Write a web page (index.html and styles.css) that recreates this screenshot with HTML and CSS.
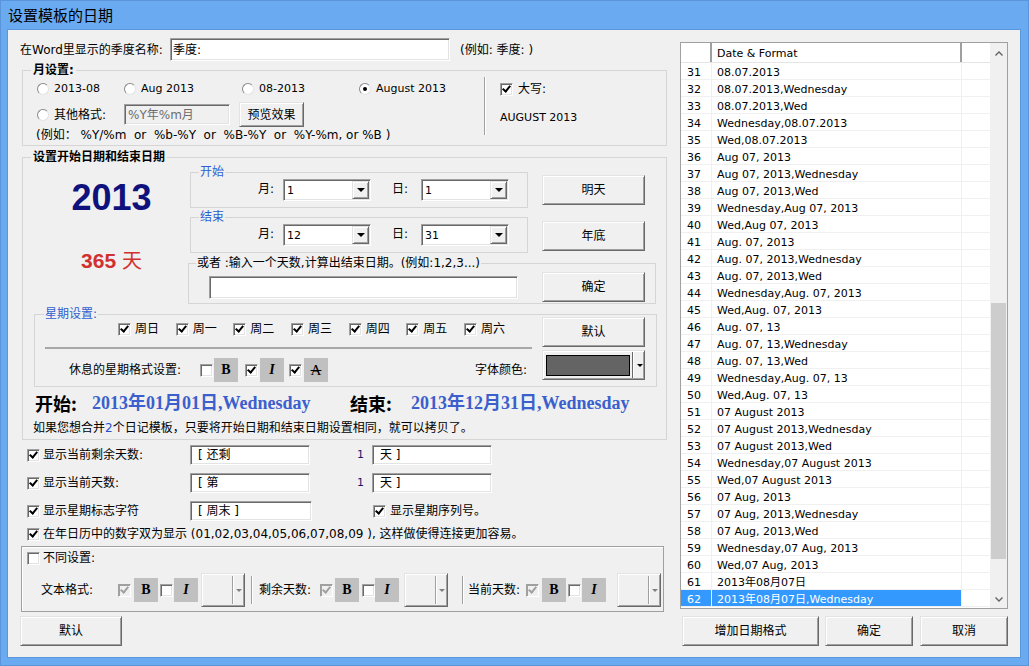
FILE: index.html
```html
<!DOCTYPE html>
<html lang="zh-CN">
<head>
<meta charset="utf-8">
<title>设置模板的日期</title>
<link rel="stylesheet" href="styles.css">
</head>
<body>
<div class="win">
  <div class="title">设置模板的日期</div>
  <div class="client">
    <div class="left">
      <div class="rowA">
        <span class="lblA">在Word里显示的季度名称:</span>
        <span class="edit editA">季度:</span>
        <span class="exA">(例如: 季度: )</span>
      </div>

      <fieldset class="grp g1">
        <legend class="lg-b">月设置:</legend>
        <div class="g1-body">
          <div class="g1-left">
            <div class="g1-r1">
              <span class="opt o1"><span class="rd"></span><span class="lat">2013-08</span></span>
              <span class="opt o2"><span class="rd"></span><span class="lat">Aug 2013</span></span>
              <span class="opt o3"><span class="rd"></span><span class="lat">08-2013</span></span>
              <span class="opt"><span class="rd on"></span><span class="lat">August 2013</span></span>
            </div>
            <div class="g1-r2">
              <span class="opt o1"><span class="rd"></span>其他格式:</span>
              <span class="edit editB">%Y年%m月</span>
              <span class="btn btnPrev">预览效果</span>
            </div>
            <div class="g1-r3">(例如： %Y/%m  or  %b-%Y  or  %B-%Y  or  %Y-%m, or %B )</div>
          </div>
          <div class="g1-sep"></div>
          <div class="g1-right">
            <div class="upper"><span class="cb on"></span><span>大写:</span></div>
            <div class="lat upval">AUGUST 2013</div>
          </div>
        </div>
      </fieldset>

      <fieldset class="grp g2">
        <legend class="lg-b">设置开始日期和结束日期</legend>
        <div class="g2-body">
          <div class="g2-top">
            <div class="colA">
              <div class="year">2013</div>
              <div class="days">365 <span class="unit">天</span></div>
            </div>
            <div class="colB">
              <fieldset class="grp sg sg1">
                <legend>开始</legend>
                <div class="sg-body">
                  <span class="lblM">月:</span>
                  <span class="combo"><span class="val">1</span><span class="dd"><i class="tri"></i></span></span>
                  <span class="lblD">日:</span>
                  <span class="combo"><span class="val">1</span><span class="dd"><i class="tri"></i></span></span>
                </div>
              </fieldset>
              <fieldset class="grp sg sg2">
                <legend>结束</legend>
                <div class="sg-body">
                  <span class="lblM">月:</span>
                  <span class="combo"><span class="val">12</span><span class="dd"><i class="tri"></i></span></span>
                  <span class="lblD">日:</span>
                  <span class="combo"><span class="val">31</span><span class="dd"><i class="tri"></i></span></span>
                </div>
              </fieldset>
            </div>
            <div class="colC">
              <span class="btn b103 bTom">明天</span>
              <span class="btn b103 bEnd">年底</span>
            </div>
          </div>

          <fieldset class="grp orf">
            <legend>或者 :输入一个天数,计算出结束日期。(例如:1,2,3...)</legend>
            <div class="or-body">
              <span class="edit or-edit"></span>
              <span class="btn b103 or-btn">确定</span>
            </div>
          </fieldset>

          <fieldset class="grp wk">
            <legend>星期设置:</legend>
            <div class="wk-body">
              <div class="wk-left">
                <div class="wk-r1">
                  <span class="day"><span class="cb on"></span>周日</span>
                  <span class="day"><span class="cb on"></span>周一</span>
                  <span class="day"><span class="cb on"></span>周二</span>
                  <span class="day"><span class="cb on"></span>周三</span>
                  <span class="day"><span class="cb on"></span>周四</span>
                  <span class="day"><span class="cb on"></span>周五</span>
                  <span class="day"><span class="cb on"></span>周六</span>
                </div>
                <div class="wk-sep"></div>
                <div class="wk-r2">
                  <span class="restLbl">休息的星期格式设置:</span>
                  <span class="cb"></span>
                  <span class="fb m1">B</span>
                  <span class="cb on m7"></span>
                  <span class="fb it m2">I</span>
                  <span class="cb on m5"></span>
                  <span class="fb st m2">A</span>
                  <span class="colorLbl">字体颜色:</span>
                </div>
              </div>
              <div class="wk-right">
                <span class="btn b103 bDef">默认</span>
                <span class="ccombo"><span class="swatch"></span><span class="cdiv"></span><i class="tri sm"></i></span>
              </div>
            </div>
          </fieldset>

          <div class="dates">
            <span class="dl dl1">开始:</span><span class="dv dv1">2013年01月01日,Wednesday</span>
            <span class="dl dl2">结束:</span><span class="dv">2013年12月31日,Wednesday</span>
          </div>
          <div class="note">如果您想合并<span class="blue">2</span>个日记模板，只要将开始日期和结束日期设置相同，就可以拷贝了。</div>
        </div>
      </fieldset>

      <div class="lrow lr1">
        <span class="cb on"></span><span class="lrLbl">显示当前剩余天数:</span>
        <span class="edit e120">[ 还剩</span>
        <span class="numLbl">1</span>
        <span class="edit e120">天 ]</span>
      </div>
      <div class="lrow lr2">
        <span class="cb on"></span><span class="lrLbl">显示当前天数:</span>
        <span class="edit e120">[ 第</span>
        <span class="numLbl">1</span>
        <span class="edit e120">天 ]</span>
      </div>
      <div class="lrow lr3">
        <span class="cb on"></span><span class="lrLbl">显示星期标志字符</span>
        <span class="edit e122">[ 周末 ]</span>
        <span class="cb on cb2"></span><span class="lbl2">显示星期序列号。</span>
      </div>
      <div class="lrow lr4">
        <span class="cb on"></span><span class="lbl4">在年日历中的数字双为显示 (01,02,03,04,05,06,07,08,09 ), 这样做使得连接更加容易。</span>
      </div>

      <div class="diff">
        <div class="d-r1"><span class="cb"></span><span class="dlbl">不同设置:</span></div>
        <div class="d-r2">
          <span class="tfLbl">文本格式:</span>
          <span class="cb on dis"></span>
          <span class="fb m3">B</span>
          <span class="cb m2"></span>
          <span class="fb it m1">I</span>
          <span class="scombo m3"><span class="cdiv"></span><i class="tri sm g"></i></span>
          <span class="vsep m6"></span>
          <span class="rsLbl m6">剩余天数:</span>
          <span class="cb on dis"></span>
          <span class="fb m2">B</span>
          <span class="cb m3"></span>
          <span class="fb it">I</span>
          <span class="scombo m5"><span class="cdiv"></span><i class="tri sm g"></i></span>
          <span class="vsep m14"></span>
          <span class="cdLbl m4">当前天数:</span>
          <span class="cb on dis"></span>
          <span class="fb m3">B</span>
          <span class="cb m2"></span>
          <span class="fb it m1">I</span>
          <span class="scombo m11"><span class="cdiv"></span><i class="tri sm g"></i></span>
        </div>
      </div>

      <span class="btn bDefL">默认</span>
    </div>

    <div class="right">
      <div class="list">
        <div class="tbl">
          <div class="hdr"><span></span><span class="h2">Date &amp; Format</span><span class="h3"></span></div>
          <div class="row"><span>31</span><span>08.07.2013</span><span></span></div>
          <div class="row"><span>32</span><span>08.07.2013,Wednesday</span><span></span></div>
          <div class="row"><span>33</span><span>08.07.2013,Wed</span><span></span></div>
          <div class="row"><span>34</span><span>Wednesday,08.07.2013</span><span></span></div>
          <div class="row"><span>35</span><span>Wed,08.07.2013</span><span></span></div>
          <div class="row"><span>36</span><span>Aug 07, 2013</span><span></span></div>
          <div class="row"><span>37</span><span>Aug 07, 2013,Wednesday</span><span></span></div>
          <div class="row"><span>38</span><span>Aug 07, 2013,Wed</span><span></span></div>
          <div class="row"><span>39</span><span>Wednesday,Aug 07, 2013</span><span></span></div>
          <div class="row"><span>40</span><span>Wed,Aug 07, 2013</span><span></span></div>
          <div class="row"><span>41</span><span>Aug. 07, 2013</span><span></span></div>
          <div class="row"><span>42</span><span>Aug. 07, 2013,Wednesday</span><span></span></div>
          <div class="row"><span>43</span><span>Aug. 07, 2013,Wed</span><span></span></div>
          <div class="row"><span>44</span><span>Wednesday,Aug. 07, 2013</span><span></span></div>
          <div class="row"><span>45</span><span>Wed,Aug. 07, 2013</span><span></span></div>
          <div class="row"><span>46</span><span>Aug. 07, 13</span><span></span></div>
          <div class="row"><span>47</span><span>Aug. 07, 13,Wednesday</span><span></span></div>
          <div class="row"><span>48</span><span>Aug. 07, 13,Wed</span><span></span></div>
          <div class="row"><span>49</span><span>Wednesday,Aug. 07, 13</span><span></span></div>
          <div class="row"><span>50</span><span>Wed,Aug. 07, 13</span><span></span></div>
          <div class="row"><span>51</span><span>07 August 2013</span><span></span></div>
          <div class="row"><span>52</span><span>07 August 2013,Wednesday</span><span></span></div>
          <div class="row"><span>53</span><span>07 August 2013,Wed</span><span></span></div>
          <div class="row"><span>54</span><span>Wednesday,07 August 2013</span><span></span></div>
          <div class="row"><span>55</span><span>Wed,07 August 2013</span><span></span></div>
          <div class="row"><span>56</span><span>07 Aug, 2013</span><span></span></div>
          <div class="row"><span>57</span><span>07 Aug, 2013,Wednesday</span><span></span></div>
          <div class="row"><span>58</span><span>07 Aug, 2013,Wed</span><span></span></div>
          <div class="row"><span>59</span><span>Wednesday,07 Aug, 2013</span><span></span></div>
          <div class="row"><span>60</span><span>Wed,07 Aug, 2013</span><span></span></div>
          <div class="row"><span>61</span><span>2013年08月07日</span><span></span></div>
          <div class="row sel"><span>62</span><span>2013年08月07日,Wednesday</span><span></span></div>
        </div>
        <div class="vs">
          <div class="vs-btn up"><svg width="8" height="5" viewBox="0 0 8 5"><polyline points="0.5,4.5 4,1 7.5,4.5" fill="none" stroke="#606060" stroke-width="1.3"/></svg></div>
          <div class="vs-track"><div class="thumb"></div></div>
          <div class="vs-btn"><svg width="8" height="5" viewBox="0 0 8 5"><polyline points="0.5,0.5 4,4 7.5,0.5" fill="none" stroke="#606060" stroke-width="1.3"/></svg></div>
        </div>
      </div>
      <div class="rbtns">
        <span class="btn rb1">增加日期格式</span>
        <span class="btn rb2">确定</span>
        <span class="btn rb3">取消</span>
      </div>
    </div>
  </div>
</div>
</body>
</html>
```

FILE: styles.css
```css
*{box-sizing:border-box;margin:0;padding:0}
html,body{width:1029px;height:666px;overflow:hidden;background:#6aaaf0}
.win{width:1029px;height:666px;background:#6aaaf0;box-shadow:inset 0 0 0 1px #5a95da;display:flex;flex-direction:column;font-family:"DejaVu Sans","Noto Sans CJK SC",sans-serif;font-size:12px;line-height:14px;color:#000}
.title{flex:none;height:30px;padding-left:8px;font-family:"Noto Sans CJK SC",sans-serif;font-size:15px;line-height:30px}
.client{flex:none;margin-left:8px;width:1012px;height:627px;background:#f0f0f0;display:flex;box-shadow:0 0 0 1px #5b97dc}
.left{flex:none;width:672px;padding-left:12px;display:flex;flex-direction:column;align-items:flex-start}
.right{flex:none;width:340px;display:flex;flex-direction:column;align-items:flex-start}
.lat{font-size:11px}

.m1{margin-left:1px}.m2{margin-left:2px}.m3{margin-left:3px}.m4{margin-left:4px}.m5{margin-left:5px}.m6{margin-left:6px}.m7{margin-left:7px}.m11{margin-left:11px}.m14{margin-left:14px}

/* controls */
.edit{flex:none;display:flex;align-items:center;background:#fff;border:1px solid;border-color:#a0a0a0 #fff #fff #a0a0a0;box-shadow:inset 1px 1px 0 #696969,inset -1px -1px 0 #e3e3e3;padding-left:3px;white-space:nowrap;overflow:hidden}
.btn{flex:none;display:flex;align-items:center;justify-content:center;background:#f0f0f0;border:1px solid;border-color:#e3e3e3 #696969 #696969 #e3e3e3;box-shadow:inset 1px 1px 0 #fff,inset -1px -1px 0 #a0a0a0;font-size:12px;white-space:nowrap}
.cb{flex:none;width:13px;height:13px;background:#fff;border:1px solid;border-color:#a0a0a0 #fff #fff #a0a0a0;box-shadow:inset 1px 1px 0 #696969,inset -1px -1px 0 #e3e3e3;display:flex;align-items:center;justify-content:center}
.cb.on::after{content:"";width:3px;height:6px;border:solid #000;border-width:0 2px 2px 0;transform:rotate(40deg);margin-top:-2px}
.cb.dis{background:#f0f0f0;box-shadow:inset 1px 1px 0 #a0a0a0}
.cb.dis::after{border-color:#a0a0a0}
.rd{flex:none;width:12px;height:12px;border-radius:50%;background:#fff;border:1px solid;border-color:#8a8a8a #e3e3e3 #e3e3e3 #8a8a8a;margin-right:5px;display:flex;align-items:center;justify-content:center}
.rd.on::after{content:"";width:4px;height:4px;border-radius:50%;background:#000}
.tri{flex:none;display:block;width:0;height:0;border-left:4px solid transparent;border-right:4px solid transparent;border-top:4px solid #000}
.tri.sm{border-left-width:3px;border-right-width:3px;border-top-width:3px}
.tri.g{border-top-color:#808080}
.fb{flex:none;width:24px;height:24px;background:#c0c0c0;display:flex;align-items:center;justify-content:center;font-family:"Liberation Serif",serif;font-weight:bold;font-size:14px;line-height:1}
.fb.it{font-style:italic}
.fb.st{font-weight:normal;font-size:15px;text-decoration:line-through}

/* group boxes */
.grp{flex:none;border:1px solid #d5d5d5;min-width:0}
.grp>legend{height:14px;line-height:14px;padding:0 2px;font-size:12px;white-space:nowrap}
.lg-b{font-weight:bold}

.rowA{flex:none;display:flex;align-items:center;height:23px;margin-top:8px}
.lblA{width:150px}
.editA{width:280px;height:23px;padding-left:2px}
.exA{margin-left:10px}

.g1{margin-top:2px;margin-left:2px;width:645px}
.g1>legend{margin-left:8px}
.g1-body{display:flex;align-items:flex-start;padding:4px 0 3px 14px}
.g1-left{flex:none;width:447px}
.g1-r1,.g1-r2{display:flex;align-items:center}
.g1-r1{height:16px}
.g1-r2{height:25px;margin-top:5px}
.g1-r3{height:14px;margin-top:1px;margin-left:-1px;white-space:pre}
.opt{flex:none;display:flex;align-items:center}
.o1{width:87px}.o2{width:118px}.o3{width:117px}
.editB{width:106px;height:21px;background:#f0f0f0;color:#6d6d6d}
.btnPrev{margin-left:9px;width:65px;height:25px}
.g1-sep{flex:none;width:2px;height:58px;margin-top:-4px;border-left:1px solid #a0a0a0;border-right:1px solid #fff}
.g1-right{padding-left:14px}
.upper{display:flex;align-items:center;height:16px}
.upper .cb{margin-right:5px}
.upval{margin-top:14px;height:14px}

.g2{margin-top:4px;margin-left:2px;width:645px}
.g2>legend{margin-left:8px}
.g2-body{padding-bottom:4px}
.g2-top{display:flex;height:89px}
.colA{flex:none;width:167px;padding-left:10px;text-align:center}
.year{margin-top:14px;font:bold 36px/40px "Liberation Sans",sans-serif;color:#0f117c}
.days{margin-top:30px;font:bold 21px/24px "Liberation Sans",sans-serif;color:#d1302f;white-space:nowrap}
.days .unit{font:normal 20px/24px "Noto Sans CJK SC",sans-serif}
.colB{flex:none;width:338px}
.sg{width:338px}
.sg>legend{margin-left:8px;padding:0 1px;color:#2e5fcf}
.sg1{margin-top:1px}.sg2{margin-top:2px}
.sg-body{display:flex;align-items:flex-start;height:28px}
.lblM{flex:none;margin-left:67px;width:25px;height:21px;line-height:21px}
.lblD{flex:none;margin-left:21px;width:29px;height:21px;line-height:21px}
.combo{flex:none;display:flex;width:88px;height:22px;background:#fff;border:1px solid;border-color:#a0a0a0 #fff #fff #a0a0a0;box-shadow:inset 1px 1px 0 #696969,inset -1px -1px 0 #e3e3e3}
.combo .val{flex:1;padding-left:3px;font-size:11px;line-height:21px}
.dd{flex:none;width:17px;margin:1px 1px 1px 0;background:#f0f0f0;border:1px solid;border-color:#e3e3e3 #696969 #696969 #e3e3e3;box-shadow:inset 1px 1px 0 #fff,inset -1px -1px 0 #a0a0a0;display:flex;align-items:center;justify-content:center}
.colC{flex:none;margin-left:14px;display:flex;flex-direction:column}
.b103{width:103px;height:30px}
.bTom{margin-top:11px}
.bEnd{margin-top:16px}

.orf{margin-top:3px;margin-left:165px;width:468px}
.orf>legend{margin-left:7px;padding:0 1px}
.or-body{display:flex;align-items:flex-start;height:33px;padding-top:2px}
.or-edit{margin-left:20px;margin-top:4px;width:309px;height:23px}
.or-btn{margin-left:24px}

.wk{margin-top:3px;margin-left:11px;width:623px}
.wk>legend{margin-left:9px;padding:0 1px;color:#2e5fcf}
.wk-body{display:flex;height:65px}
.wk-left{flex:none;width:507px}
.wk-r1{display:flex;align-items:center;height:16px;padding-left:83px}
.day{flex:none;width:57.67px;display:flex;align-items:center}
.day .cb{margin-right:4px}
.wk-sep{margin:10px 0 0 10px;width:487px;height:2px;background:#a8a8a8}
.wk-r2{display:flex;align-items:center;height:24px;margin-top:9px}
.restLbl{flex:none;margin-left:34px;width:131px}
.colorLbl{margin-left:auto;margin-right:15px}
.wk-right{flex:none;width:103px;display:flex;flex-direction:column}
.bDef{margin-top:-4px}
.ccombo{flex:none;margin-top:3px;width:103px;height:30px;display:flex;align-items:center;background:#f0f0f0;border:1px solid;border-color:#e3e3e3 #696969 #696969 #e3e3e3;box-shadow:inset 1px 1px 0 #fff,inset -1px -1px 0 #a0a0a0}
.swatch{flex:none;margin-left:3px;width:84px;height:21px;background:#646464;border:1px solid #000}
.cdiv{flex:none;margin-left:2px;width:2px;height:26px;border-left:1px solid #696969;border-right:1px solid #fff}
.ccombo .tri{margin-left:3px}

.dates{display:flex;align-items:center;height:22px;margin-top:5px;white-space:nowrap}
.dl{flex:none;font:bold 18px/22px "Noto Sans CJK SC",sans-serif}
.dv{flex:none;font:bold 18px/22px "Liberation Serif","Noto Sans CJK SC",serif;color:#3b5fcc}
.dl1{margin-left:12px;width:57px}
.dv1{width:258px}
.dl2{width:61px}
.note{height:14px;margin-top:7px;margin-left:10px;white-space:nowrap}
.note .blue{color:#1f4fd0}

/* lower option rows */
.lrow{flex:none;display:flex;align-items:center;height:20px;white-space:nowrap}
.lr1{margin-top:5px}
.lr2,.lr3{margin-top:8px}
.lr4{height:16px;margin-top:5px}
.lrow>.cb:first-child{margin-left:7px}
.lrLbl{flex:none;margin-left:3px;width:147px}
.e120{width:120px;height:20px;padding-left:7px}
.e122{width:122px;height:20px;padding-left:7px}
.numLbl{flex:none;margin-left:47px;width:15px;font-size:11px;color:#16166a}
.cb2{margin-left:61px}
.lbl2{margin-left:4px}
.lbl4{margin-left:3px}

.diff{flex:none;margin-top:4px;margin-left:1px;width:643px;height:66px;border:1px solid #a0a0a0;box-shadow:inset 1px 1px 0 #fff;padding:3px 0 0 5px}
.d-r1{display:flex;align-items:center;height:16px}
.dlbl{margin-left:3px}
.d-r2{display:flex;align-items:center;height:34px;margin-top:7px;white-space:nowrap}
.tfLbl{flex:none;margin-left:14px;width:77px}
.rsLbl{flex:none;width:61px}
.cdLbl{flex:none;width:58px}
.scombo{flex:none;width:44px;height:34px;display:flex;align-items:center;background:#f0f0f0;border:1px solid;border-color:#e3e3e3 #696969 #696969 #e3e3e3;box-shadow:inset 1px 1px 0 #fff,inset -1px -1px 0 #a0a0a0}
.scombo .cdiv{margin-left:30px;height:28px;border-left-color:#a0a0a0}
.scombo .tri{margin-left:2px}
.vsep{flex:none;width:2px;height:28px;border-left:1px solid #a0a0a0;border-right:1px solid #fff}

.bDefL{margin-top:4px;width:102px;height:30px}

/* list */
.list{flex:none;margin-top:12px;width:328px;height:567px;border:1px solid #a0a0a0;display:flex;background:#fff}
.tbl{flex:none;width:309px;font-size:11px}
.hdr,.row{display:grid;grid-template-columns:31px 250px 28px}
.hdr{height:20px;border-bottom:1px solid #e5e5e5}
.hdr span{border-right:2px solid #a0a0a0;padding-top:4px;line-height:14px}
.hdr .h2{padding-left:5px}
.hdr .h3{border-right:0}
.row{height:17px;border-bottom:1px solid #f0f0f0;white-space:nowrap}
.row span{padding-top:3px;line-height:13px}
.row span:nth-child(1){padding-left:6px;border-right:1px solid #f0f0f0}
.row span:nth-child(2){padding-left:5px;border-right:1px solid #f0f0f0}
.row.sel span:nth-child(1),.row.sel span:nth-child(2){background:#3399ff;color:#fff}
.vs{flex:none;width:17px;background:#f0f0f0;display:flex;flex-direction:column}
.vs-btn{flex:none;height:17px;display:flex;align-items:center;justify-content:center}
.vs-btn.up{padding-top:3px}
.vs-track{flex:1}
.thumb{margin:243px 1px 0;height:256px;background:#cdcdcd}

.rbtns{flex:none;display:flex;margin-top:7px;height:30px}
.rb1{margin-left:2px;width:137px;height:30px}
.rb2{margin-left:6px;width:88px;height:30px}
.rb3{margin-left:7px;width:88px;height:30px}
```
